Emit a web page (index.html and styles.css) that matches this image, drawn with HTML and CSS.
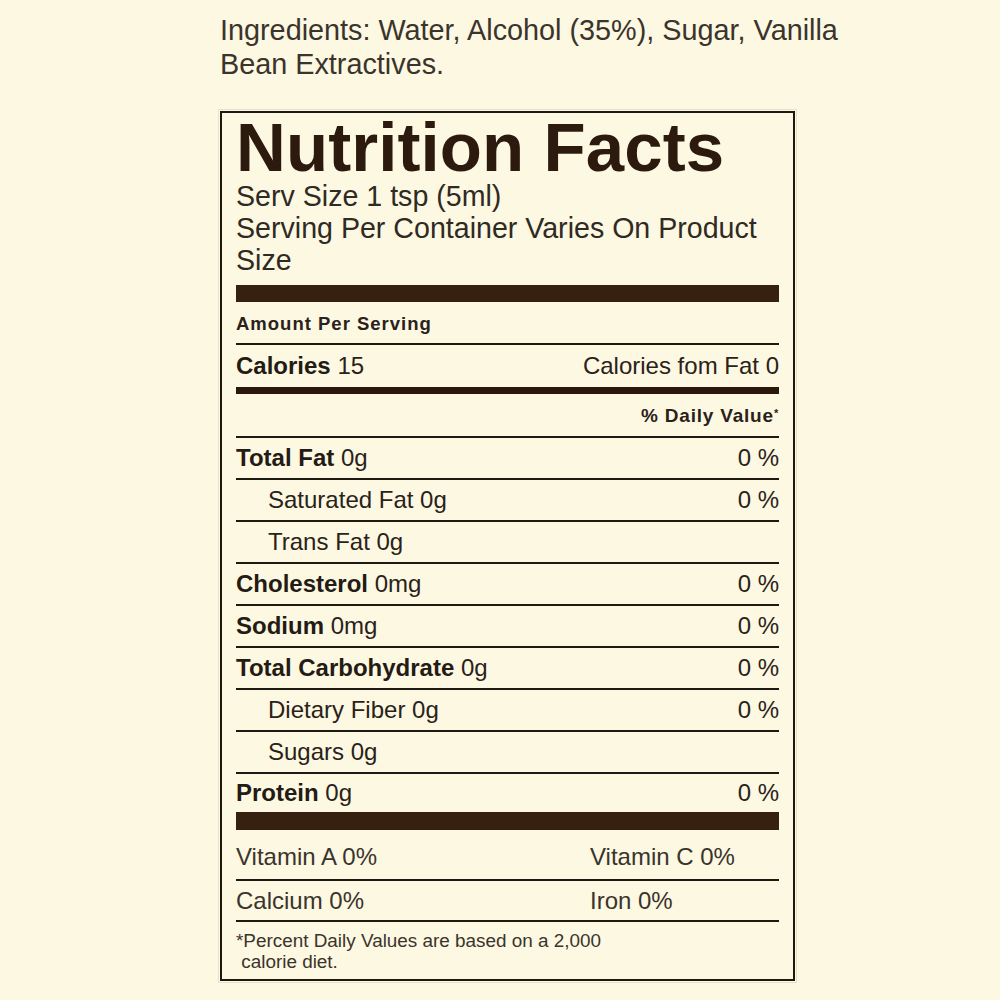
FILE: index.html
```html
<!DOCTYPE html>
<html>
<head>
<meta charset="utf-8">
<link rel="stylesheet" href="styles.css">
</head>
<body>
<div class="page">
  <p class="ingredients">Ingredients: Water, Alcohol (35%), Sugar, Vanilla<br>Bean Extractives.</p>
  <div class="label">
    <h1 class="title">Nutrition Facts</h1>
    <div class="serving">Serv Size 1 tsp (5ml)<br>Serving Per Container Varies On Product<br>Size</div>
    <div class="bar bar-top"></div>
    <div class="row amount"><span>Amount Per Serving</span></div>
    <div class="row calories"><span><b>Calories</b> 15</span><span>Calories fom Fat 0</span></div>
    <div class="row dv"><span></span><span>% Daily Value<sup>*</sup></span></div>
    <div class="row nut"><span><b>Total Fat</b> 0g</span><span>0 %</span></div>
    <div class="row nut sub"><span>Saturated Fat 0g</span><span>0 %</span></div>
    <div class="row nut sub"><span>Trans Fat 0g</span><span></span></div>
    <div class="row nut"><span><b>Cholesterol</b> 0mg</span><span>0 %</span></div>
    <div class="row nut"><span><b>Sodium</b> 0mg</span><span>0 %</span></div>
    <div class="row nut"><span><b>Total Carbohydrate</b> 0g</span><span>0 %</span></div>
    <div class="row nut sub"><span>Dietary Fiber 0g</span><span>0 %</span></div>
    <div class="row nut sub"><span>Sugars 0g</span><span></span></div>
    <div class="row protein"><span><b>Protein</b> 0g</span><span>0 %</span></div>
    <div class="bar bar-bottom"></div>
    <div class="vit vit-first"><span>Vitamin A 0%</span><span>Vitamin C 0%</span></div>
    <div class="vit vit-second"><span>Calcium 0%</span><span>Iron 0%</span></div>
    <p class="footnote">*Percent Daily Values are based on a 2,000<br>&nbsp;calorie diet.</p>
  </div>
</div>
</body>
</html>
```

FILE: styles.css
```css
html, body {
  margin: 0;
  padding: 0;
  background: #fdf8e2;
}
body {
  font-family: "Liberation Sans", Arial, sans-serif;
  color: #2a221a;
}
.page {
  width: 1000px;
  height: 1000px;
  padding-left: 220px;
  box-sizing: border-box;
}
.ingredients {
  margin: 0;
  padding-top: 13px;
  font-size: 28.8px;
  line-height: 34px;
  color: #3a342c;
}
.label {
  margin-top: 30px;
  width: 575px;
  height: 870px;
  box-sizing: border-box;
  border: 2px solid #1c1812;
  outline: 1px solid #e8e2ca;
  outline-offset: 1px;
  padding: 3px 14px 0 14px;
}
.title {
  margin: 0;
  height: 64px;
  font-size: 69px;
  line-height: 64px;
  font-weight: bold;
  color: #2b1a0d;
  letter-spacing: 0.1px;
}
.serving {
  font-size: 28.6px;
  line-height: 32px;
  color: #2f2a24;
}
.bar {
  background: #36200f;
}
.bar-top {
  margin-top: 9px;
  height: 17px;
}
.bar-bottom {
  height: 18px;
}
.row {
  display: flex;
  justify-content: space-between;
  align-items: center;
  box-sizing: border-box;
  border-bottom: 2px solid #1c1812;
  font-size: 24px;
}
.row b {
  font-weight: bold;
  color: #231b14;
}
.amount {
  height: 43px;
  font-size: 18.5px;
  font-weight: bold;
  letter-spacing: 1px;
  padding-top: 2px;
}
.calories {
  height: 49px;
  border-bottom: 7px solid #2a180c;
}
.dv {
  height: 44px;
  font-size: 19px;
  font-weight: bold;
  letter-spacing: 0.8px;
  padding-top: 2px;
}
.dv sup {
  font-size: 11px;
  vertical-align: 5px;
}
.nut {
  height: 42px;
}
.sub {
  padding-left: 32px;
}
.protein {
  height: 38px;
  border-bottom: none;
}
.vit {
  display: grid;
  grid-template-columns: 354px 1fr;
  align-items: center;
  box-sizing: border-box;
  border-bottom: 2px solid #1c1812;
  font-size: 24px;
  color: #3a342c;
}
.vit-first {
  height: 51px;
  padding-top: 4px;
}
.vit-second {
  height: 41px;
}
.footnote {
  margin: 0;
  padding-top: 8px;
  font-size: 18.9px;
  line-height: 21px;
  color: #3a342c;
}
```
